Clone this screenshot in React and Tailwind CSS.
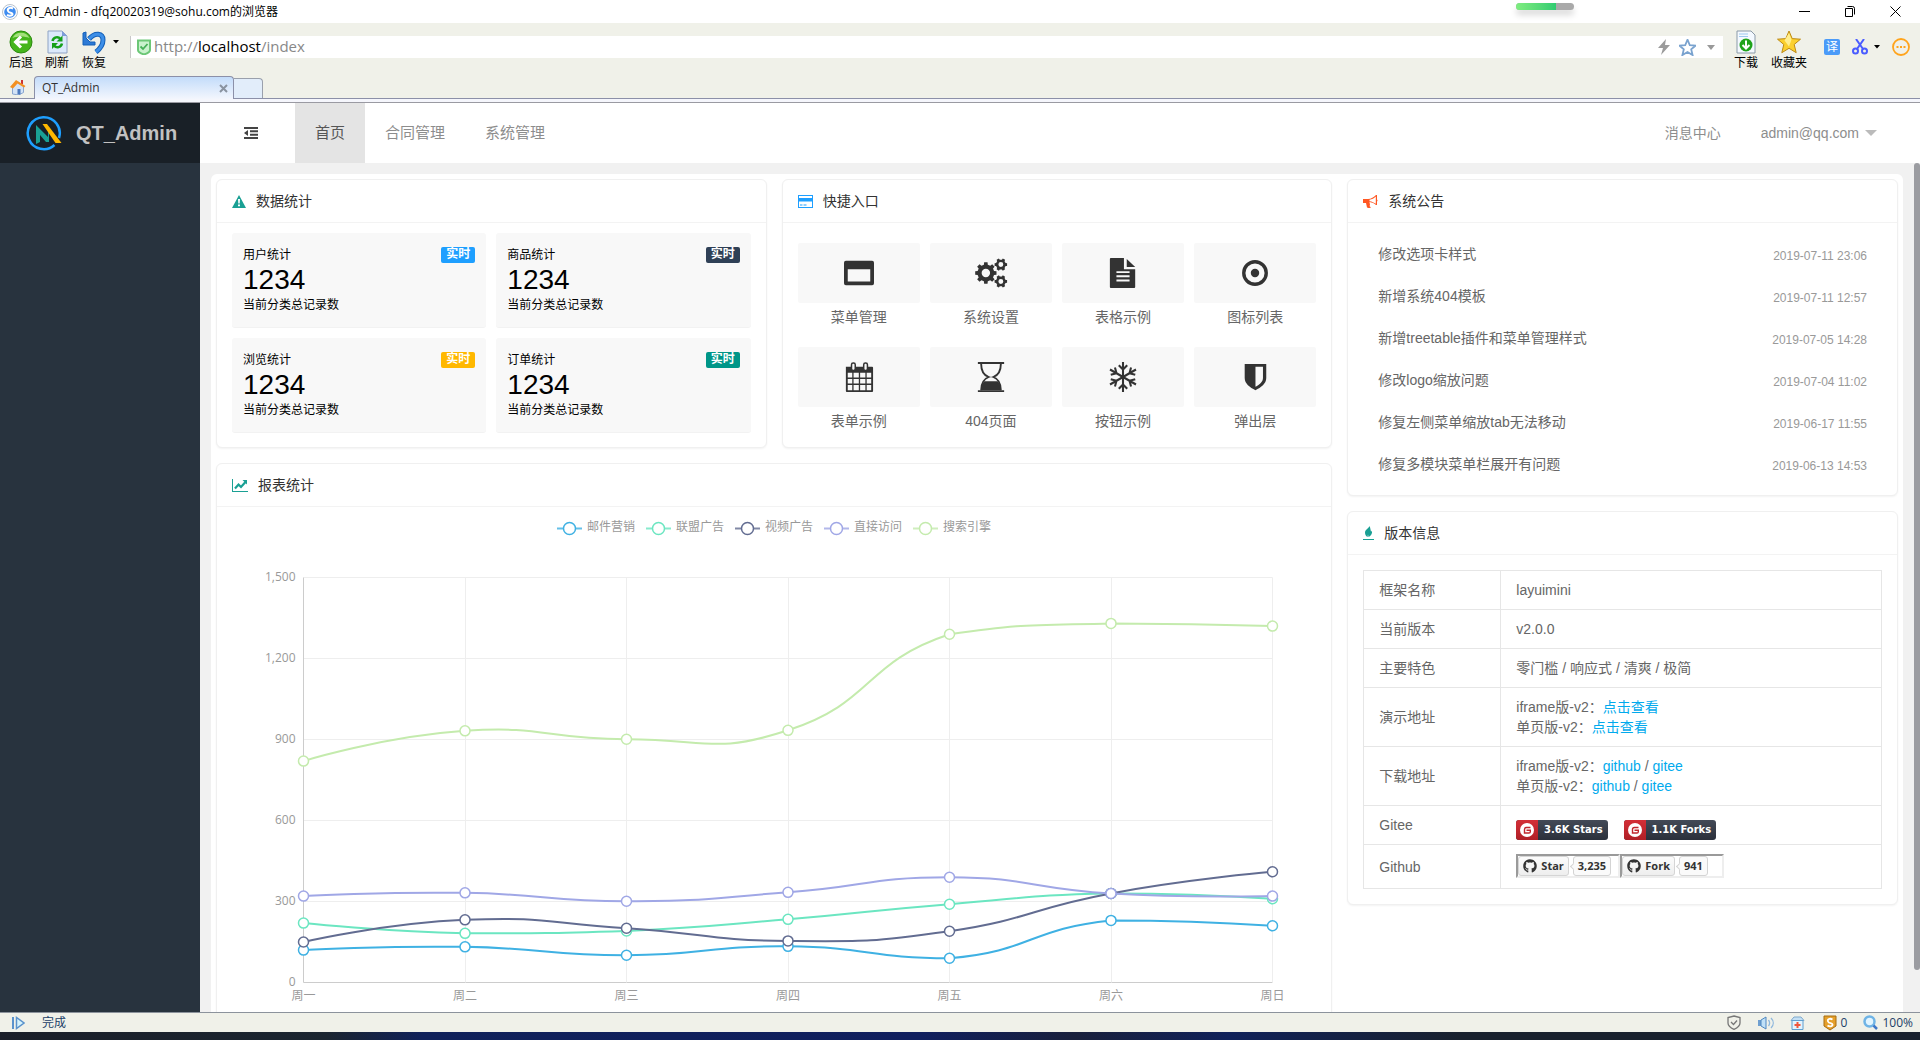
import React, { useEffect, useRef, useState } from 'react';
import { FaGithub } from 'react-icons/fa';

const stats = [
  { title: '用户统计', color: 'bg-[#1e9fff]' },
  { title: '商品统计', color: 'bg-[#2f4056]' },
  { title: '浏览统计', color: 'bg-[#ffb800]' },
  { title: '订单统计', color: 'bg-[#009688]' },
];

const notices = [
  ['修改选项卡样式', '2019-07-11 23:06'],
  ['新增系统404模板', '2019-07-11 12:57'],
  ['新增treetable插件和菜单管理样式', '2019-07-05 14:28'],
  ['修改logo缩放问题', '2019-07-04 11:02'],
  ['修复左侧菜单缩放tab无法移动', '2019-06-17 11:55'],
  ['修复多模块菜单栏展开有问题', '2019-06-13 14:53'],
];

const days = ['周一', '周二', '周三', '周四', '周五', '周六', '周日'];
const series = [
  { name: '邮件营销', color: '#3fb1e3', data: [120, 132, 101, 134, 90, 230, 210] },
  { name: '联盟广告', color: '#6be6c1', data: [220, 182, 191, 234, 290, 330, 310] },
  { name: '视频广告', color: '#626c91', data: [150, 232, 201, 154, 190, 330, 410] },
  { name: '直接访问', color: '#a0a7e6', data: [320, 332, 301, 334, 390, 330, 320] },
  { name: '搜索引擎', color: '#c4ebad', data: [820, 932, 901, 934, 1290, 1330, 1320] },
];

/* ---------- quick entry icons, all on a 32x32 grid ---------- */

// cog outline with a round hole in the middle
function gear(cx, cy, r, hole, teeth) {
  const step = (Math.PI * 2) / teeth;
  const pts = [];
  for (let i = 0; i < teeth; i++) {
    const a = i * step;
    [[-0.3, 0.78], [-0.2, 1], [0.2, 1], [0.3, 0.78]].forEach(([t, k]) => {
      pts.push(`${(cx + Math.cos(a + t * step) * r * k).toFixed(2)} ${(cy + Math.sin(a + t * step) * r * k).toFixed(2)}`);
    });
  }
  return `M${pts.join('L')}Z M${cx - hole} ${cy}a${hole} ${hole} 0 1 0 ${hole * 2} 0a${hole} ${hole} 0 1 0 ${-hole * 2} 0Z`;
}

const icons = {
  window: <path fillRule="evenodd" d="M2 3h28a2 2 0 0 1 2 2v22a2 2 0 0 1-2 2H2a2 2 0 0 1-2-2V5a2 2 0 0 1 2-2ZM4 12v13h24V12Z" />,
  cogs: (
    <g fillRule="evenodd">
      <path d={gear(10.5, 16, 11.5, 4.5, 8)} />
      <path d={gear(26.5, 7, 6.8, 2.6, 6)} />
      <path d={gear(26.5, 25, 6.8, 2.6, 6)} />
    </g>
  ),
  file: (
    <path fillRule="evenodd" d="M4 0h13v12h12v19a1 1 0 0 1-1 1H3a1 1 0 0 1-1-1V1a1 1 0 0 1 1-1ZM20 1l9 8.500H20ZM9 14v2h14v-2ZM9 18.500v2h14v-2ZM9 23v2h14v-2Z" />
  ),
  dot: (
    <>
      <circle cx="16" cy="16" r="12" fill="none" stroke="currentColor" strokeWidth="3.600" />
      <circle cx="16" cy="16" r="4.500" />
    </>
  ),
  calendar: (
    <>
      <path fillRule="evenodd" d="M2 5h28a1 1 0 0 1 1 1v25a1 1 0 0 1-1 1H3a1 1 0 0 1-1-1ZM4 11.500v5h4.800v-5ZM10.200 11.500v5h5.600v-5ZM17.200 11.500v5h5.600v-5ZM24.200 11.500v5H29v-5ZM4 18v5h4.800v-5ZM10.200 18v5h5.600v-5ZM17.200 18v5h5.600v-5ZM24.200 18v5H29v-5ZM4 24.500V30h4.800v-5.500ZM10.200 24.500V30h5.600v-5.500ZM17.200 24.500V30h5.600v-5.500ZM24.200 24.500V30H29v-5.500Z" />
      <rect x="8" y="1" width="4" height="8" rx="1.800" fill="#f8f8f8" stroke="currentColor" strokeWidth="1.600" />
      <rect x="21" y="1" width="4" height="8" rx="1.800" fill="#f8f8f8" stroke="currentColor" strokeWidth="1.600" />
    </>
  ),
  hourglass: (
    <>
      <path d="M2 0h28v2H2ZM2 30h28v2H2Z" />
      <path d="M5.500 2c0 8 3 12 8 14-5 2-8 6-8 14M26.500 2c0 8-3 12-8 14 5 2 8 6 8 14" fill="none" stroke="currentColor" strokeWidth="2" />
      <path d="M9 20.500h14C25.500 23 26.500 26 26.500 30h-21c0-4 1-7 3.500-9.500Z" />
    </>
  ),
  snow: (
    <g fill="none" stroke="currentColor" strokeWidth="2.200">
      {[0, 60, 120, 180, 240, 300].map((a) => (
        <path key={a} d="M16 16V0M11.500 3.500l4.500 4.500 4.500-4.500" transform={`rotate(${a} 16 16)`} />
      ))}
    </g>
  ),
  shield: <path fillRule="evenodd" d="M5 2h23v15c0 6-5.500 10-11.500 13C10.500 27 5 23 5 17ZM16.500 5v21.500c4.500-2.500 8-5.500 8-9.500V5Z" />,
};

const entries = [
  ['菜单管理', 'window'],
  ['系统设置', 'cogs'],
  ['表格示例', 'file'],
  ['图标列表', 'dot'],
  ['表单示例', 'calendar'],
  ['404页面', 'hourglass'],
  ['按钮示例', 'snow'],
  ['弹出层', 'shield'],
];

function Card({ icon, title, children }) {
  return (
    <section className="rounded-md border border-[#f0f0f0] bg-white shadow-[0_1px_2px_rgba(0,0,0,0.05)]">
      <h2 className="flex h-[43px] items-center gap-[10px] border-b border-[#f3f3f3] px-[15px] text-sm text-[#333]">
        {icon}
        {title}
      </h2>
      {children}
    </section>
  );
}

/* ---------- line chart ---------- */

// smooth 0.5 curve, control points kept inside the bounds of the series
function smoothPath(pts) {
  const ys = pts.map((p) => p[1]);
  const min = Math.min(...ys);
  const max = Math.max(...ys);
  const clamp = (y) => Math.max(min, Math.min(max, y));
  let d = `M${pts[0][0]} ${pts[0][1]}`;
  let cp = pts[0];
  for (let i = 1; i < pts.length; i++) {
    const p = pts[i];
    const next = pts[i + 1];
    let cp1 = p;
    let cp2 = p;
    if (next) {
      const prev = pts[i - 1];
      const vx = next[0] - prev[0];
      const vy = next[1] - prev[1];
      const lenPrev = Math.hypot(p[0] - prev[0], p[1] - prev[1]);
      const lenNext = Math.hypot(p[0] - next[0], p[1] - next[1]);
      const ratio = lenNext / (lenNext + lenPrev);
      cp1 = [p[0] - vx * 0.5 * (1 - ratio), clamp(p[1] - vy * 0.5 * (1 - ratio))];
      cp2 = [p[0] + vx * 0.5 * ratio, clamp(p[1] + vy * 0.5 * ratio)];
    }
    d += `C${cp[0]} ${cp[1]} ${cp1[0]} ${cp1[1]} ${p[0]} ${p[1]}`;
    cp = cp2;
  }
  return d;
}

function LineChart() {
  const box = useRef(null);
  const [width, setWidth] = useState(1114);

  useEffect(() => {
    const ro = new ResizeObserver(([e]) => setWidth(Math.round(e.contentRect.width)));
    ro.observe(box.current);
    return () => ro.disconnect();
  }, []);

  const left = 86.5;
  const right = width - 58.5;
  const top = 70.5;
  const bottom = 475.5;
  const x = (i) => left + ((right - left) * i) / 6;
  const y = (v) => bottom - ((bottom - top) * v) / 1500;
  const crisp = (v) => Math.round(v - 0.5) + 0.5;
  const legendX = Math.round((width - 434) / 2);

  return (
    <div ref={box} className="w-full">
      <svg width="100%" height="530" className="block font-['Open_Sans','Noto_Sans_CJK_SC',sans-serif] text-xs" role="img" aria-label="报表统计">
        {series.map((s, i) => (
          <g key={s.name} transform={`translate(${legendX + i * 89} 21)`}>
            <path d="M0 0.500h25" stroke={s.color} strokeWidth="2" opacity="0.8" />
            <circle cx="12.500" cy="0.500" r="6" fill="#fff" stroke={s.color} strokeWidth="1.500" />
            <text x="30" y="3" fill="#999">{s.name}</text>
          </g>
        ))}
        {[0, 300, 600, 900, 1200, 1500].map((v) => (
          <g key={v}>
            <path d={`M${left} ${y(v)}H${right}`} stroke={v ? '#eee' : '#ccc'} />
            <text x={left - 8} y={y(v) + 3} textAnchor="end" fill="#999">{v.toLocaleString('en-US')}</text>
          </g>
        ))}
        {days.map((d, i) => (
          <g key={d}>
            <path d={`M${crisp(x(i))} ${top}V${bottom}`} stroke={i ? '#eee' : '#ccc'} />
            <text x={x(i)} y={bottom + 17} textAnchor="middle" fill="#999">{d}</text>
          </g>
        ))}
        {series.map((s) => {
          const pts = s.data.map((v, i) => [x(i), y(v)]);
          return (
            <g key={s.name} stroke={s.color}>
              <path d={smoothPath(pts)} fill="none" strokeWidth="2" />
              {pts.map((p) => (
                <circle key={p[0]} cx={p[0]} cy={p[1]} r="5" fill="#fff" strokeWidth="1.500" />
              ))}
            </g>
          );
        })}
      </svg>
    </div>
  );
}

/* ---------- browser frame ---------- */

function ToolButton({ label, className, children }) {
  return (
    <button className={`flex flex-col items-center gap-[3px] text-xs leading-3 text-black ${className}`}>
      <svg width="24" height="24" viewBox="0 0 24 24">{children}</svg>
      <span className="whitespace-nowrap">{label}</span>
    </button>
  );
}

const starPath = 'M12 1l3.200 7.600 8.300.600-6.300 5.300 2 8.200L12 18.300l-7.200 4.400 2-8.200L.500 9.200l8.300-.600Z';

function BrowserTop() {
  return (
    <header className="shrink-0 font-['Open_Sans','Noto_Sans_CJK_SC',sans-serif]">
      <div className="relative flex h-[23px] items-center bg-white pl-[2px] pr-[19px]">
        <svg width="16" height="16" viewBox="0 0 16 16">
          <circle cx="8" cy="8" r="7.500" fill="#fff" stroke="#bcc3cc" />
          <circle cx="8" cy="8" r="5.800" fill="#3f8cf0" />
          <path d="M11 4.500C8 3 5 4.500 6 7s4 1.200 4.500 3c.4 1.600-3 2.300-5.500 1" fill="none" stroke="#fff" strokeWidth="2" />
        </svg>
        <span className="ml-[5px] text-xs text-black">QT_Admin - dfq20020319@sohu.com的浏览器</span>
        <div className="absolute right-[346px] top-[3px] flex h-[7px] w-[58px] overflow-hidden rounded-full bg-[#a9a9a9] shadow-[0_5px_6px_rgba(0,0,0,0.15)]">
          <div className="w-[40px] bg-linear-to-r from-[#7eed80] to-[#2ecc71]"></div>
        </div>
        <div className="ml-auto flex gap-[34px] text-black">
          <button aria-label="最小化"><svg width="11" height="11" viewBox="0 0 11 11"><path d="M0 5.500h11" stroke="currentColor" /></svg></button>
          <button aria-label="还原"><svg width="12" height="11" viewBox="0 0 12 11"><path d="M1.500 2.500h7v8h-7ZM3.500.500h5a2 2 0 0 1 2 2v6" fill="none" stroke="currentColor" /></svg></button>
          <button aria-label="关闭"><svg width="11" height="11" viewBox="0 0 11 11"><path d="M.500.500l10 10M10.500.500l-10 10" stroke="currentColor" /></svg></button>
        </div>
      </div>

      <div className="flex h-[53px] bg-[#f0f1e9] pt-[7px]">
        <ToolButton label="后退" className="ml-[9px]">
          <circle cx="12" cy="12" r="11" fill="#45b51c" stroke="#2c8a10" />
          <path d="M3.500 8a9.500 9.500 0 0 1 17 0c-5-2-12-2-17 0Z" fill="#a3e07c" />
          <path d="M18.500 12H7M12 6.500L6.500 12l5.500 5.500" fill="none" stroke="#fff" strokeWidth="3" />
        </ToolButton>
        <ToolButton label="刷新" className="ml-3">
          <path d="M3 1h14l5 5v17H3Z" fill="#dbe9fb" stroke="#8fa3c4" />
          <path d="M17 1v5h5Z" fill="#7f9ddb" />
          <path d="M7.500 11c1-4 5.500-5 8-2M17 13.500c-1 4-5.500 5-8 2" fill="none" stroke="#16a01a" strokeWidth="2.500" />
          <path d="M17.500 5.500v6h-6ZM7 19v-6h6Z" fill="#16a01a" />
        </ToolButton>
        <ToolButton label="恢复" className="ml-[13px]">
          <path d="M7 9c6-7 14-6 14 1 0 4-2 8-7 12" fill="none" stroke="#1460b8" strokeWidth="5" />
          <path d="M7 9c6-7 14-6 14 1 0 4-2 8-7 12" fill="none" stroke="#3d8fe8" strokeWidth="3" />
          <path d="M1 3l3-1v6l4 4h5v3H1Z" fill="#2d7ad6" stroke="#1460b8" />
        </ToolButton>
        <svg className="ml-[7px] mt-[10px]" width="6" height="4" viewBox="0 0 6 4"><path d="M0 0h6L3 3.500Z" /></svg>

        <div className="ml-[11px] mt-[6px] flex h-[22px] flex-1 items-center border-l border-[#c8c8c8] bg-white pl-[6px] pr-2">
          <svg width="14" height="16" viewBox="0 0 14 16">
            <path d="M1 1.500h12V11c0 2-3 3.500-6 4.500C4 14.500 1 13 1 11Z" fill="#c9f2cd" stroke="#6cc777" strokeWidth="2" />
            <path d="M3.500 7.500L6 10l4.500-5" fill="none" stroke="#46b058" strokeWidth="1.800" />
          </svg>
          {/* the input holds the value, the spans behind it colour the host */}
          <label className="relative ml-[3px] flex flex-1 pb-[2px] text-[15px] leading-5">
            <span aria-hidden="true" className="text-[#888]">http://<span className="text-black">localhost</span>/index</span>
            <input type="text" aria-label="地址" defaultValue="http://localhost/index" className="absolute inset-0 w-full bg-transparent text-transparent caret-black outline-none" />
          </label>
          <svg width="13" height="16" viewBox="0 0 13 16"><path d="M8 0L0 9h5l-2 7 9-10H7Z" fill="#9b9b9b" /></svg>
          <svg className="ml-2" width="17" height="17" viewBox="0 0 24 24"><path d={starPath} fill="none" stroke="#7aa3cf" strokeWidth="2.500" /></svg>
          <svg className="ml-[11px]" width="8" height="5" viewBox="0 0 8 5"><path d="M0 0h8L4 5Z" fill="#999" /></svg>
        </div>

        <ToolButton label="下载" className="ml-[11px]">
          <path d="M3 1h14l4 4v18H3Z" fill="#f4f9ff" stroke="#8b9aa8" />
          <path d="M5 4h9M5 6.500h9" stroke="#9cc8ee" />
          <circle cx="12" cy="15" r="6.500" fill="#1fa31a" />
          <path d="M12 10.500v8M8.500 15l3.500 3.500 3.500-3.500" fill="none" stroke="#fff" strokeWidth="2" />
        </ToolButton>
        <ToolButton label="收藏夹" className="ml-[13px]">
          <path d={starPath} fill="#fbd02f" stroke="#bd8a14" />
          <path d="M12 3l2.500 6.500-2.500 7-4.500-6Z" fill="#ffee8e" />
        </ToolButton>
        <div className="ml-[17px] flex h-[34px] items-center pr-[10px]">
          <button className="size-4 rounded-xs bg-[#4b9bf8] text-center text-xs leading-4 text-white">译</button>
          <svg className="ml-3" width="16" height="16" viewBox="0 0 16 16" fill="none" stroke="#4a5cff" strokeWidth="2">
            <circle cx="3.500" cy="12" r="2.500" /><circle cx="12.500" cy="12" r="2.500" /><path d="M4 0l7 10M12 0L5 10" />
          </svg>
          <svg className="ml-[6px]" width="6" height="4" viewBox="0 0 6 4"><path d="M0 0h6L3 3.500Z" /></svg>
          <svg className="ml-3" width="18" height="18" viewBox="0 0 18 18">
            <circle cx="9" cy="9" r="8" fill="none" stroke="#ffa41c" strokeWidth="1.800" />
            <path d="M4.500 9h2M8 9h2M11.500 9h2" stroke="#ffa41c" strokeWidth="2" />
          </svg>
        </div>
      </div>

      <div className="flex h-[23px] items-end border-b border-[#8c90a8] bg-[#f0f1e9] pl-[10px]">
        <svg className="mb-[3px]" width="16" height="16" viewBox="0 0 16 16">
          <path d="M2.500 8v7l6 1 5-2.500V7L8 3Z" fill="#d3e3f7" stroke="#8aa6cf" />
          <path d="M7.500 10h3v5.500h-3Z" fill="#4d79bd" />
          <path d="M11 1h2v4h-2Z" fill="#c33" />
          <path d="M0 8l6-7 9.500 6-1.500 1.500L7.500 4.500 3 9.500Z" fill="#f39021" />
        </svg>
        <div className="-mb-px ml-2 flex h-[23px] w-[200px] items-center rounded-t-sm border border-b-0 border-[#8c90a8] bg-linear-to-b from-[#c3dcfa] to-[#f3f6fd] pl-[7px] pr-[5px]">
          <span className="text-xs text-[#333]">QT_Admin</span>
          <button aria-label="关闭标签" className="ml-auto"><svg width="9" height="9" viewBox="0 0 9 9"><path d="M1 1l7 7M8 1L1 8" stroke="#8a93a0" strokeWidth="2" /></svg></button>
        </div>
        <button aria-label="新建标签" className="h-[20px] w-[29px] rounded-tr-sm border border-b-0 border-l-0 border-[#9aa0ac] bg-[#e2edfa]"></button>
      </div>
      <div className="h-1 border-b border-[#9a9aa2] bg-[#f5f6fc]"></div>
    </header>
  );
}

function StatusBar() {
  return (
    <footer className="shrink-0 font-['Open_Sans','Noto_Sans_CJK_SC',sans-serif] text-xs text-[#1c3f68]">
      <div className="flex h-5 items-center border-t border-[#8c939c] bg-[#f0f1e9] pl-3 pr-[7px]">
        <svg width="13" height="14" viewBox="0 0 13 14"><path d="M1 1v12" stroke="#5b93cc" strokeWidth="2" /><path d="M4.500 1.500v11l7.500-5.500Z" fill="#d7f3fb" stroke="#5b93cc" strokeWidth="1.500" /></svg>
        <span className="ml-[17px]">完成</span>
        <div className="ml-auto flex items-center">
          <svg width="14" height="15" viewBox="0 0 14 15" fill="none" stroke="#777" strokeWidth="1.300"><path d="M7 1l6 1.500V8c0 3-3 5-6 6.300C4 13 1 11 1 8V2.500Z" /><path d="M4 7l2.500 2.500L10 5.500" /></svg>
          <svg className="ml-4" width="18" height="14" viewBox="0 0 18 14"><path d="M1 4h3v6H1Z" fill="#6f9fd0" /><path d="M4 4l5-3v12l-5-3Z" fill="#bfe0f7" stroke="#4f87c0" /><path d="M11.500 4c1.500 2 1.500 4 0 6M14 2c3 3 3 7 0 10" fill="none" stroke="#8fb8dd" strokeWidth="1.300" /></svg>
          <svg className="ml-[15px]" width="15" height="14" viewBox="0 0 15 14"><path d="M1 4.500L4 1h7l3 3.500Z" fill="#c4e0f5" stroke="#7fa8cc" /><path d="M2 4.500h11v9H2Z" fill="#e3f3fd" stroke="#5f9fd0" /><path d="M7.500 6v6M4.500 9h6" stroke="#f0573c" strokeWidth="2" /></svg>
          <svg className="ml-[18px]" width="14" height="16" viewBox="0 0 14 16"><path d="M1 1h12v10l-6 4-6-4Z" fill="#e5a02b" stroke="#a86c10" /><path d="M9.500 4.500C7 3 4 4 5 6.500s4 1 4.500 3-3 2.500-5 1" fill="none" stroke="#fff" strokeWidth="1.800" /></svg>
          <span className="ml-1">0</span>
          <svg className="ml-4" width="15" height="15" viewBox="0 0 15 15"><circle cx="6.500" cy="6.500" r="5" fill="#e2f5ff" stroke="#6fb4e6" strokeWidth="2.500" /><path d="M10.500 10.500L14 14" stroke="#3f78c8" strokeWidth="2.500" /></svg>
          <span className="ml-1">100%</span>
        </div>
      </div>
      <div className="h-2 bg-[linear-gradient(90deg,#1b1f29_0%,#1b2530_17%,#10215a_22%,#101f5e_48%,#19203c_56%,#10215a_64%,#19212e_76%,#19212e_100%)]"></div>
    </footer>
  );
}

/* ---------- version table ---------- */

function Row({ name, cell = 'py-[9px]', children }) {
  return (
    <tr>
      <th scope="row" className="w-[137px] border border-[#e6e6e6] px-[15px] py-[9px] text-left font-normal">{name}</th>
      <td className={`border border-[#e6e6e6] px-[15px] ${cell}`}>{children}</td>
    </tr>
  );
}

function Link({ children }) {
  return <a href="#" className="text-[#01aaed]">{children}</a>;
}

function GiteeBadge({ children }) {
  return (
    <a href="#" className="flex h-5 w-[92px] overflow-hidden rounded-[3px] bg-linear-to-b from-[#434a57] to-[#2b303b] text-[10px] font-bold text-white font-['DejaVu_Sans',sans-serif]">
      <span className="flex w-[22px] items-center justify-center bg-linear-to-b from-[#d32f37] to-[#b01f26]">
        <svg width="14" height="14" viewBox="0 0 14 14"><circle cx="7" cy="7" r="7" fill="#fff" /><path d="M10.500 4.500H6.500A2 2 0 0 0 4.500 6.500v3.500H9a1.300 1.300 0 0 0 1.300-1.300V7.300H6.500" fill="none" stroke="#c1272d" strokeWidth="1.400" /></svg>
      </span>
      <span className="flex-1 whitespace-nowrap text-center leading-5">{children}</span>
    </a>
  );
}

function GithubFrame({ label, count }) {
  return (
    <div className="flex h-6 w-[104px] gap-1 border-2 border-b-[#eee] border-l-[#9a9a9a] border-r-[#eee] border-t-[#9a9a9a] text-[11px] font-bold leading-[18px] text-[#333] font-['Open_Sans',sans-serif]">
      <button className="flex items-center gap-1 rounded-[3px] border border-[#d5d5d5] bg-linear-to-b from-[#fcfcfc] to-[#eee] px-1">
        <FaGithub size={14} />
        {label}
      </button>
      <a href="#" className="relative rounded-[3px] border border-[#d4d4d4] bg-[#fafafa] px-1">
        {count}
        <i className="absolute -left-[3px] top-[7px] size-[5px] rotate-45 border-b border-l border-[#d4d4d4] bg-[#fafafa]"></i>
      </a>
    </div>
  );
}

export default function App() {
  return (
    <div className="flex h-screen flex-col overflow-hidden bg-white font-['Liberation_Sans','Noto_Sans_CJK_SC',sans-serif]">
      <BrowserTop />

      <div className="flex min-h-0 flex-1">
        {/* left side */}
        <aside className="w-[200px] shrink-0 bg-[#28333e]">
          <div className="flex h-[60px] items-center bg-[#192027] pl-[25px]">
            <svg width="37" height="37" viewBox="0 0 37 37">
              <path d="M29.500 30A16 16 0 1 1 34 23" fill="none" stroke="#1e9fff" strokeWidth="2.500" />
              <path d="M11 10l12 12v-6l1-1v12h-3l-6-7v7l-4 2Z" fill="#1aa094" />
              <path d="M17.500 9h4.500L36.500 28h-6Z" fill="#ffb800" />
            </svg>
            <h1 className="ml-[14px] text-xl font-bold text-[#c2c2c2]">QT_Admin</h1>
          </div>
        </aside>

        <div className="flex min-w-0 flex-1 flex-col">
          {/* top nav */}
          <nav className="flex h-[60px] shrink-0 items-center bg-white text-[15px] text-[#8d8d8d]">
            <button aria-label="收缩菜单" className="ml-11">
              <svg width="14" height="12" viewBox="0 0 14 12" fill="#444"><path d="M0 0h14v2H0ZM6 3.300h8v2H6ZM6 6.700h8v2H6ZM0 10h14v2H0ZM0 6l4-3v6Z" /></svg>
            </button>
            <a href="#" className="ml-[37px] w-[70px] bg-[#e4e4e4] text-center leading-[60px] text-[#565656]">首页</a>
            <a href="#" className="px-5">合同管理</a>
            <a href="#" className="px-5">系统管理</a>
            <div className="ml-auto flex items-center pr-[43px] text-sm">
              <a href="#" className="px-5">消息中心</a>
              <a href="#" className="flex items-center gap-[6px] pl-5">
                admin@qq.com
                <svg width="12" height="6" viewBox="0 0 12 6"><path d="M0 0h12L6 6Z" fill="#bbb" /></svg>
              </a>
            </div>
          </nav>

          <div className="flex min-h-0 flex-1 overflow-hidden bg-[#f1f1f1]">
            <main className="mx-[11px] mt-[11px] min-w-0 flex-1 rounded-t-md bg-white p-[5px]">
              <div className="grid grid-cols-3 items-start gap-[15px]">
                <div className="col-span-2 flex flex-col gap-[15px]">
                  <div className="grid grid-cols-2 gap-[15px]">
                    <Card
                      title="数据统计"
                      icon={<svg width="14" height="13" viewBox="0 0 14 13"><path fillRule="evenodd" d="M7 0l7 13H0ZM6 4l.300 4.500h1.400L8 4ZM6 9.500v1.800h2V9.500Z" fill="#1aa094" /></svg>}
                    >
                      <div className="grid grid-cols-2 gap-[10px] px-[15px] pb-[14px] pt-[10px]">
                        {stats.map((s) => (
                          <div key={s.title} className="flex h-[95px] items-start justify-between rounded-[3px] border-b border-[#f2f2f2] bg-[#f8f8f8] px-[11px] pt-[14px] text-xs leading-4 text-black">
                            <div>
                              <h5>{s.title}</h5>
                              <p className="text-[28px] leading-[34px]">1234</p>
                              <small className="block text-xs leading-4">当前分类总记录数</small>
                            </div>
                            <span className={`h-4 rounded-xs px-[5px] font-bold leading-[15px] text-white ${s.color}`}>实时</span>
                          </div>
                        ))}
                      </div>
                    </Card>

                    <Card
                      title="快捷入口"
                      icon={<svg width="15" height="13" viewBox="0 0 15 13"><path fillRule="evenodd" d="M0 0h15v13H0ZM1 1v2h13V1ZM1 6.500V12h13V6.500ZM2 9.500h2.500v1H2ZM5.500 9.500h3v1h-3Z" fill="#1e9fff" /></svg>}
                    >
                      <div className="grid grid-cols-4 gap-x-[10px] gap-y-4 px-[15px] pb-3 pt-5">
                        {entries.map(([name, icon]) => (
                          <a key={name} href="#" className="flex flex-col text-center text-sm leading-7 text-[#666]">
                            <span className="flex h-[60px] items-center justify-center rounded-xs bg-[#f8f8f8] text-[#333]">
                              <svg width="30" height="30" viewBox="0 0 32 32" fill="currentColor" className="overflow-visible">{icons[icon]}</svg>
                            </span>
                            {name}
                          </a>
                        ))}
                      </div>
                    </Card>
                  </div>

                  <Card
                    title="报表统计"
                    icon={<svg width="16" height="13" viewBox="0 0 16 13"><path d="M0 0h1v12h15v1H0Z" fill="#1aa094" /><path d="M3 9.500l3.500-4 2.500 2.500 4.500-5" fill="none" stroke="#1aa094" strokeWidth="2.200" /><path d="M10.500 1H15v4.500Z" fill="#1aa094" /></svg>}
                  >
                    <LineChart />
                  </Card>
                </div>

                <div className="flex flex-col gap-[15px]">
                  <Card
                    title="系统公告"
                    icon={<svg width="15" height="13" viewBox="0 0 15 13"><path fillRule="evenodd" d="M0 4h5c3 0 6-2 8-4h1v4.500q1 1 0 2V10h-1C11.500 8.500 9 7.300 6.500 7L7 10l-.500 1L8 12.500c-1 .700-3 .700-4 0L3 8H0ZM6.500 4.800v1.400c2.500.300 4.500 1.200 6.300 2.600V1.600C11 3.400 9 4.500 6.500 4.800Z" fill="#ff5722" /></svg>}
                  >
                    <ul className="px-[15px] py-[10px]">
                      {notices.map(([text, date]) => (
                        <li key={text}>
                          <a href="#" className="flex h-[42px] items-center justify-between px-[15px] text-sm leading-5 text-[#666]">
                            {text}
                            <time className="pt-1 text-xs text-[#999]">{date}</time>
                          </a>
                        </li>
                      ))}
                    </ul>
                  </Card>

                  <Card
                    title="版本信息"
                    icon={<svg width="11" height="14" viewBox="0 0 11 14"><path d="M0 13h11v1H0Z" fill="#1aa094" /><path d="M6.500 0c-.500 2-4.500 3.500-4.500 6.500 0 2 1 3.500 2.500 4.500.500-.500 0-1.500.500-2.500l.500 2.500C8 10 9.500 7.500 9 4.500 9 5 8.500 5.500 8 5.500 7.500 4 7.500 2 6.500 0Z" fill="#1aa094" /></svg>}
                  >
                    <div className="p-[15px]">
                      <table className="w-full border-collapse text-sm leading-5 text-[#666]">
                        <tbody>
                          <Row name="框架名称">layuimini</Row>
                          <Row name="当前版本">v2.0.0</Row>
                          <Row name="主要特色">零门槛 / 响应式 / 清爽 / 极简</Row>
                          <Row name="演示地址">
                            iframe版-v2：<Link>点击查看</Link><br />
                            单页版-v2：<Link>点击查看</Link>
                          </Row>
                          <Row name="下载地址">
                            iframe版-v2：<Link>github</Link> / <Link>gitee</Link><br />
                            单页版-v2：<Link>github</Link> / <Link>gitee</Link>
                          </Row>
                          <Row name="Gitee" cell="pb-1 pt-[14px]">
                            <div className="flex gap-4">
                              <GiteeBadge>3.6K Stars</GiteeBadge>
                              <GiteeBadge>1.1K Forks</GiteeBadge>
                            </div>
                          </Row>
                          <Row name="Github" cell="pb-[10px] pt-[9px]">
                            <div className="flex">
                              <GithubFrame label="Star" count="3,235" />
                              <GithubFrame label="Fork" count="941" />
                            </div>
                          </Row>
                        </tbody>
                      </table>
                    </div>
                  </Card>
                </div>
              </div>
            </main>
            {/* scroll bar */}
            <div className="w-[6px] shrink-0">
              <div className="h-[95%] rounded-full bg-[#9b9ca1]"></div>
            </div>
          </div>
        </div>
      </div>

      <StatusBar />
    </div>
  );
}
